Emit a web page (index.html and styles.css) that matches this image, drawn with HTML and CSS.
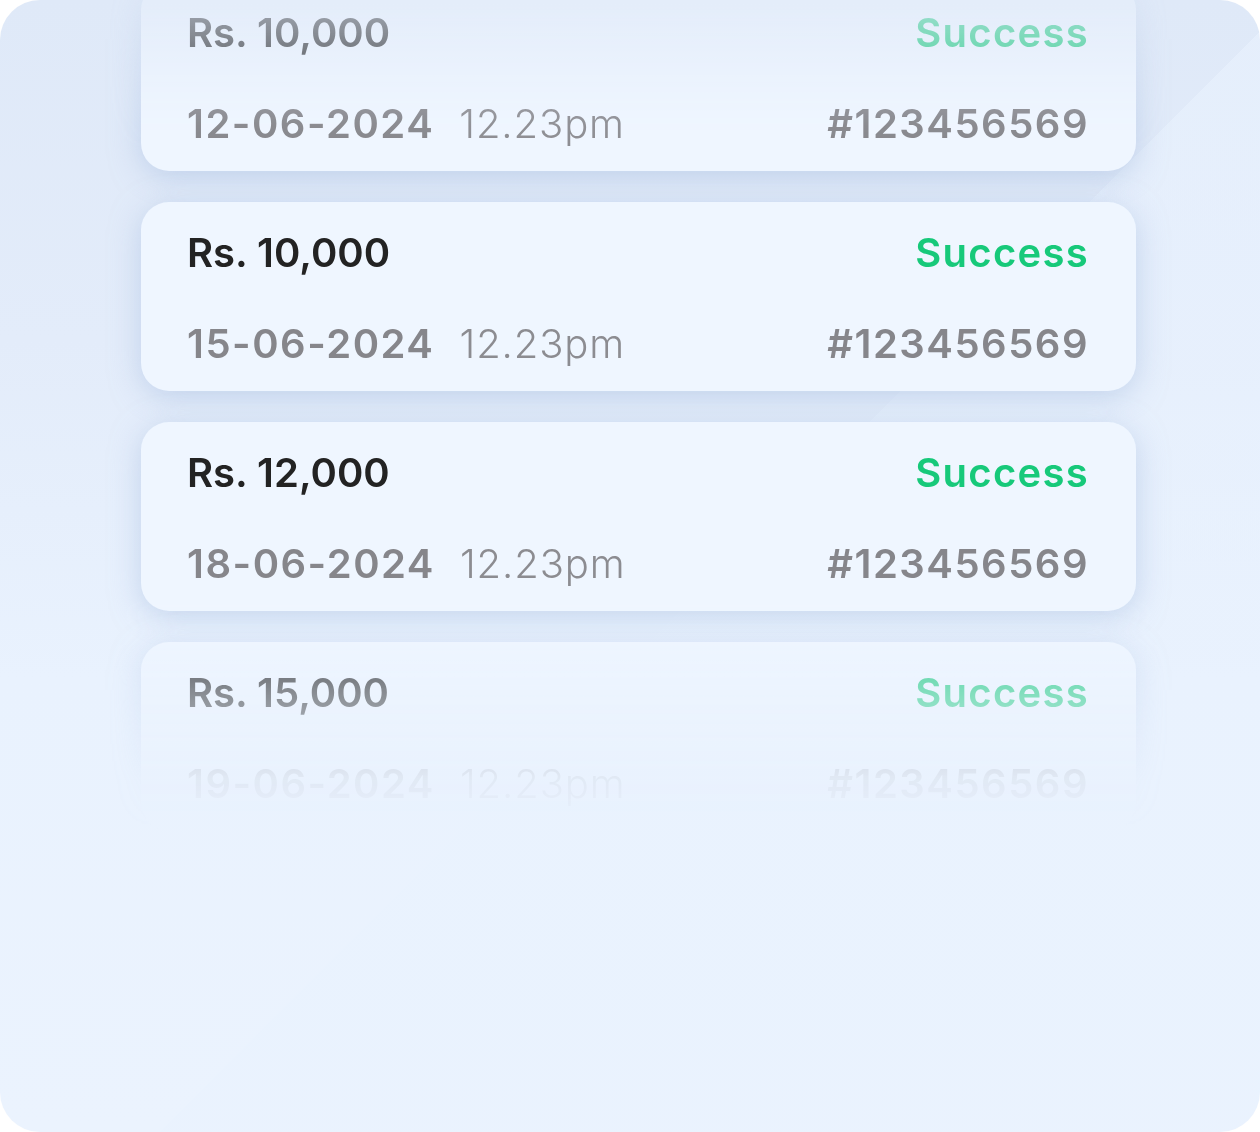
FILE: index.html
```html
<!DOCTYPE html>
<html lang="en">
  <head>
    <meta charset="UTF-8" />
    <meta name="viewport" content="width=device-width, initial-scale=1.0" />
    <title>Transactions</title>
    <link rel="stylesheet" href="styles.css">
  </head>
  <body>
    <main class="panel">
      <div class="list">
        <div class="card">
          <div class="row">
            <span class="amount">Rs. 10,000</span>
            <span class="status">Success</span>
          </div>
          <div class="row">
            <span class="when"><span class="date">12-06-2024</span><span class="time">12.23pm</span></span>
            <span class="ref">#123456569</span>
          </div>
        </div>
        <div class="card">
          <div class="row">
            <span class="amount">Rs. 10,000</span>
            <span class="status">Success</span>
          </div>
          <div class="row">
            <span class="when"><span class="date">15-06-2024</span><span class="time">12.23pm</span></span>
            <span class="ref">#123456569</span>
          </div>
        </div>
        <div class="card">
          <div class="row">
            <span class="amount">Rs. 12,000</span>
            <span class="status">Success</span>
          </div>
          <div class="row">
            <span class="when"><span class="date">18-06-2024</span><span class="time">12.23pm</span></span>
            <span class="ref">#123456569</span>
          </div>
        </div>
        <div class="card">
          <div class="row">
            <span class="amount">Rs. 15,000</span>
            <span class="status">Success</span>
          </div>
          <div class="row">
            <span class="when"><span class="date">19-06-2024</span><span class="time">12.23pm</span></span>
            <span class="ref">#123456569</span>
          </div>
        </div>
      </div>
    </main>
  </body>
</html>
```

FILE: styles.css
```css
* {
  margin: 0;
  padding: 0;
  box-sizing: border-box;
}
body {
  background-color: #ffffff;
  font-family: "Inter", "Noto Sans", sans-serif;
}
.panel {
  position: relative;
  width: 1260px;
  height: 1132px;
  border-radius: 40px;
  overflow: hidden;
  background:
    linear-gradient(135deg, transparent 54%, rgba(233, 242, 254, 0.6) 54%),
    linear-gradient(180deg, #dfe9f8 0%, #e3ecfa 30%, #e9f2fe 60%, #ebf3fe 100%);
}
.list {
  display: flex;
  flex-direction: column;
  gap: 31px;
  margin-top: -18px;
  padding: 0 124px 0 141px;
  -webkit-mask-image: linear-gradient(180deg, rgba(0, 0, 0, 0.3) 18px, rgba(0, 0, 0, 0.45) 48px, rgba(0, 0, 0, 0.95) 143px, #000 168px, #000 618px, rgba(0, 0, 0, 0.5) 708px, rgba(0, 0, 0, 0.08) 798px, transparent 848px);
  mask-image: linear-gradient(180deg, rgba(0, 0, 0, 0.3) 18px, rgba(0, 0, 0, 0.45) 48px, rgba(0, 0, 0, 0.95) 143px, #000 168px, #000 618px, rgba(0, 0, 0, 0.5) 708px, rgba(0, 0, 0, 0.08) 798px, transparent 848px);
}
.card {
  height: 189px;
  display: flex;
  flex-direction: column;
  gap: 51px;
  padding: 31px 47px 27px 46px;
  border-radius: 28px;
  background-color: #eff6ff;
  box-shadow: 0 6px 30px rgba(160, 184, 222, 0.5);
}
.row {
  display: flex;
  justify-content: space-between;
  align-items: baseline;
  font-size: 40px;
  line-height: 40px;
}
.amount {
  font-weight: 600;
  color: #232323;
}
.status {
  font-weight: 600;
  letter-spacing: 1.3px;
  color: #17c97a;
}
.when {
  display: flex;
  gap: 25px;
}
.date,
.ref {
  font-weight: 600;
  letter-spacing: 1.5px;
  color: #86868b;
}
.time {
  font-weight: 300;
  letter-spacing: 0.9px;
  color: #8c8c91;
}
```
